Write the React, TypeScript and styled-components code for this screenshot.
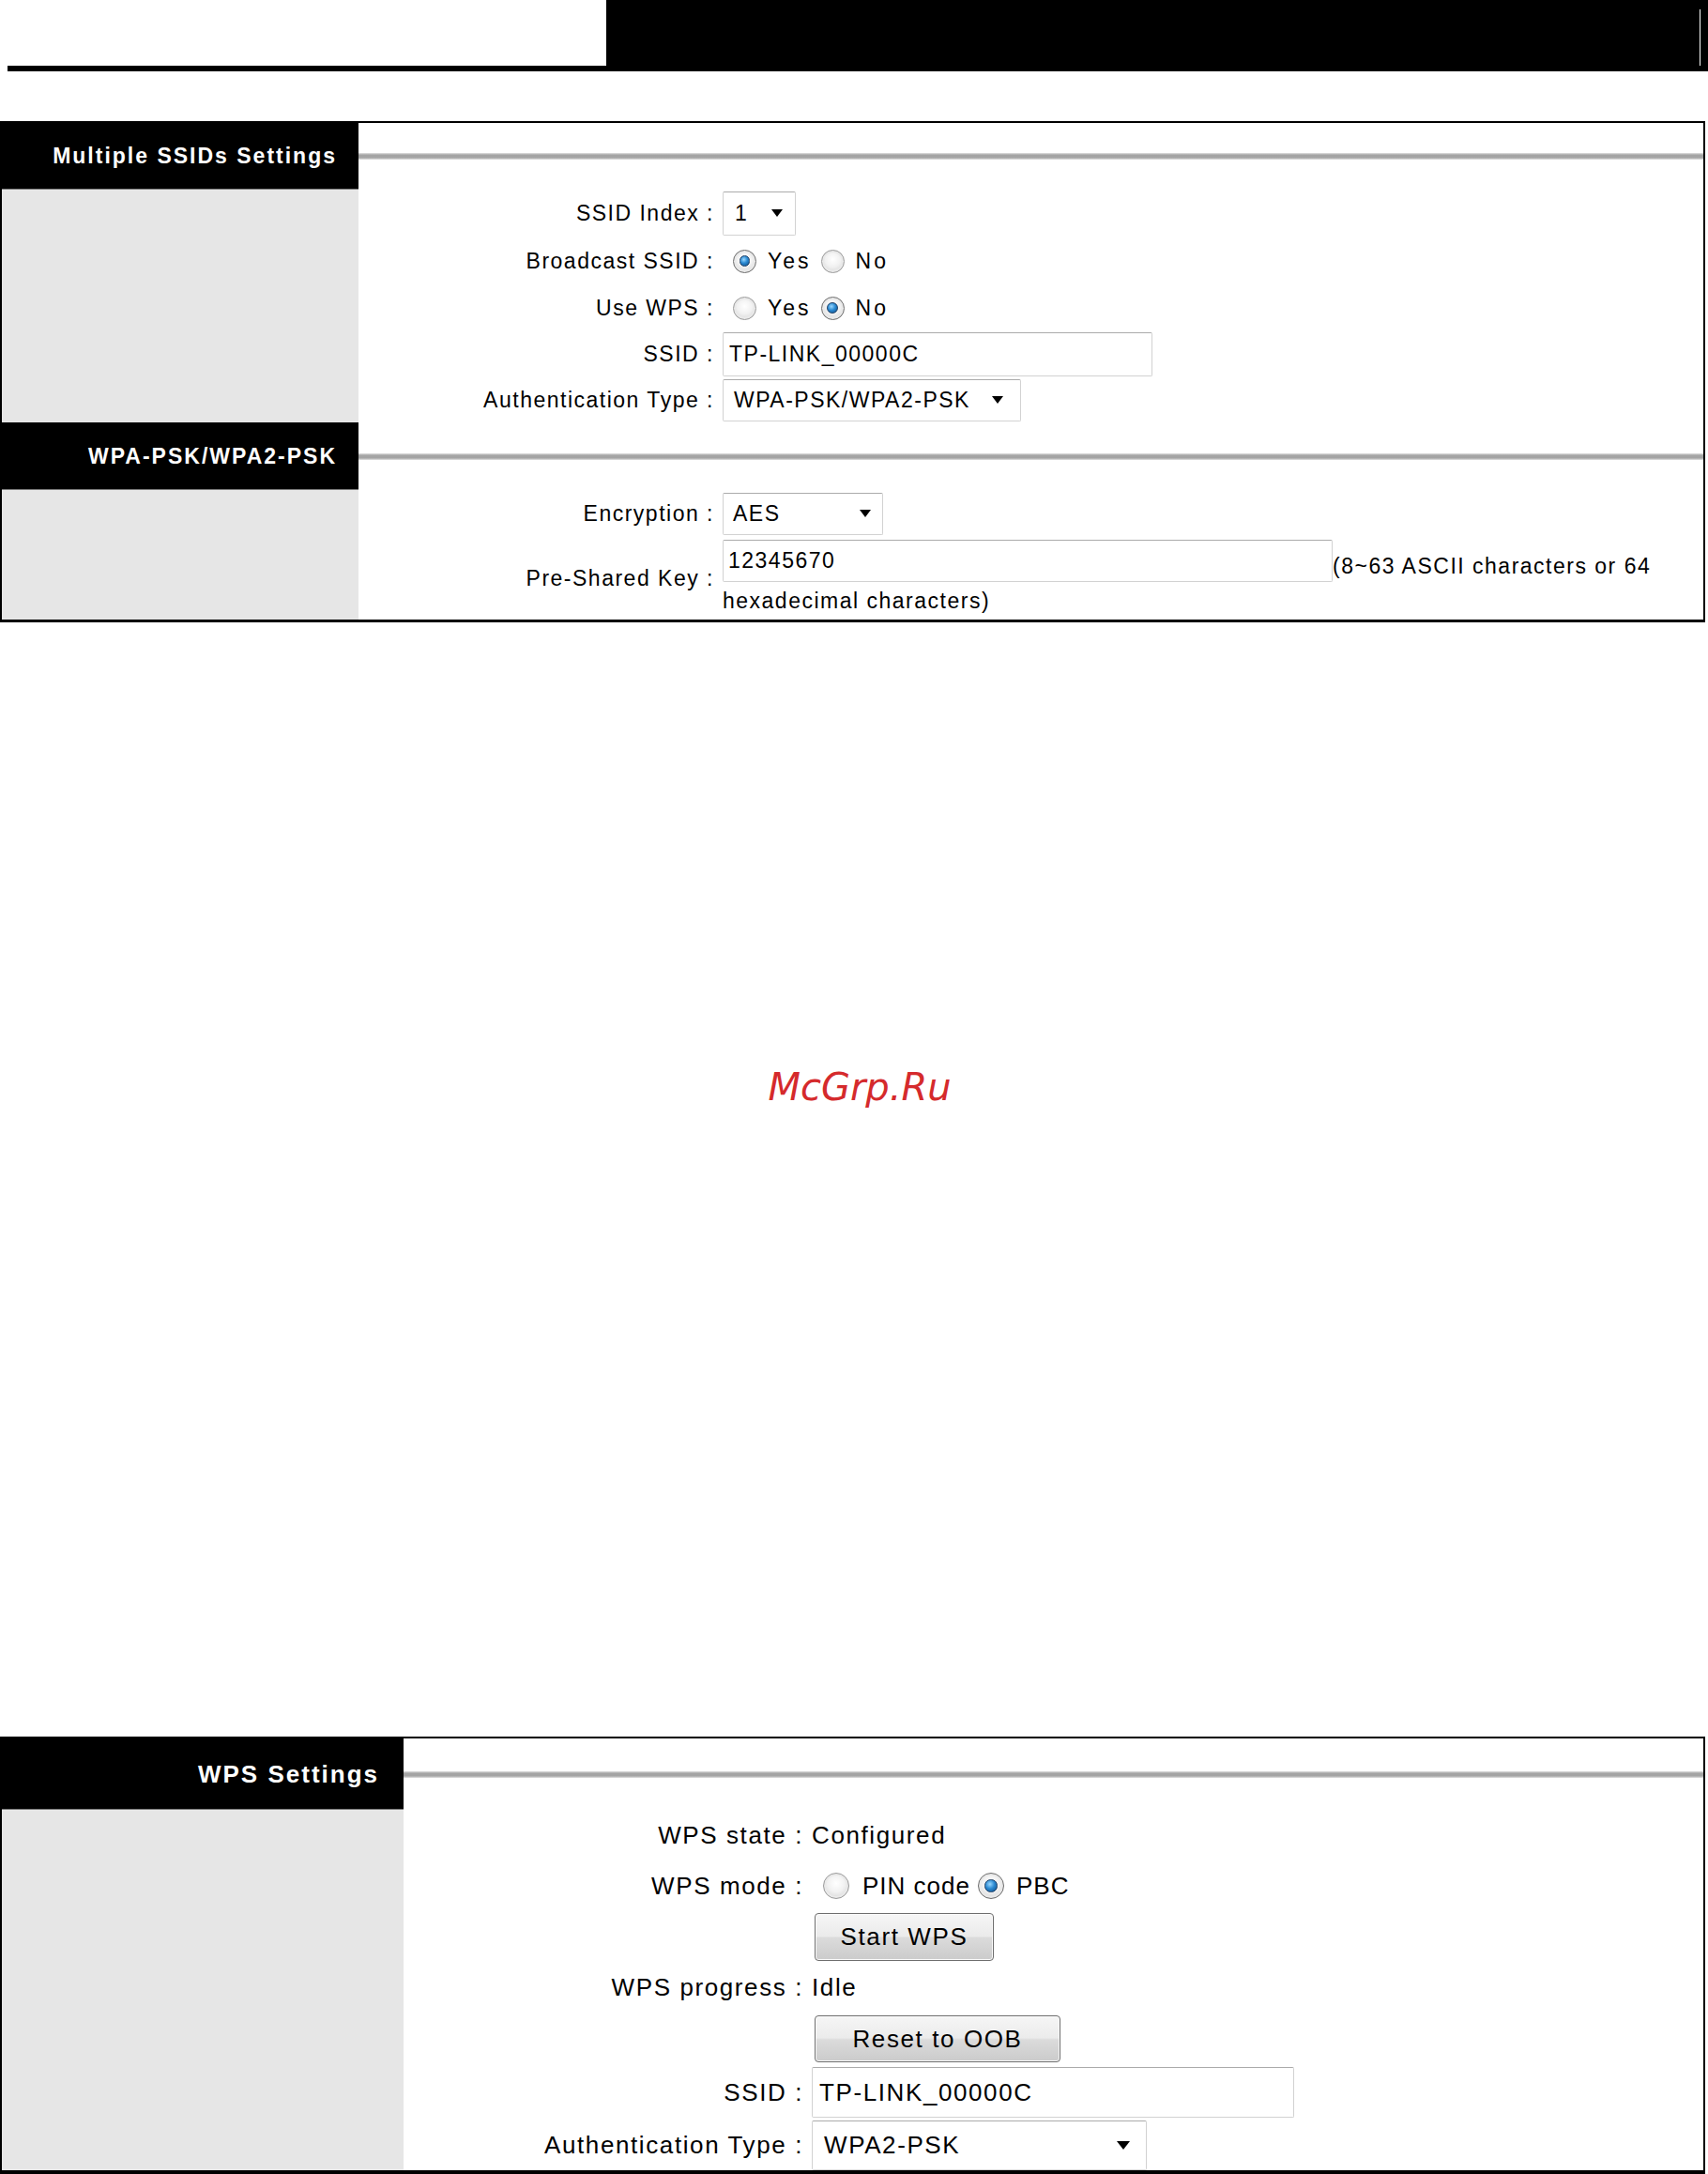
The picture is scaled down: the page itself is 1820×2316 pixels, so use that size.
import { FC, ReactNode } from "react";
import styled, { createGlobalStyle } from "styled-components";

const GlobalStyle = createGlobalStyle`
  html, body {
    margin: 0;
    padding: 0;
    background: #fff;
  }
  body {
    font-family: "Liberation Sans", Arial, sans-serif;
    color: #000;
  }
`;

const Page = styled.div`
  width: 1820px;
  height: 2316px;
  display: flex;
  flex-direction: column;
  overflow: hidden;

  & > * {
    flex-shrink: 0;
  }
`;

/* page header strip */
const TopBar = styled.header`
  display: flex;
  height: 76px;
`;

const TopLeft = styled.div`
  width: 638px;
  margin-left: 8px;
  box-sizing: border-box;
  border-bottom: 6px solid #000;
`;

const TopRight = styled.div`
  flex: 1;
  display: flex;
  justify-content: flex-end;
  padding: 10px 8px 6px 0;
  background: #000;
`;

const EdgeLine = styled.span`
  width: 1px;
  background: #fff;
`;

/* settings panels */
const Panel = styled.section<{ $mt: number; $bottom: number }>`
  margin-top: ${(p) => p.$mt}px;
  width: 1817px;
  box-sizing: border-box;
  border: 2px solid #000;
  border-bottom-width: ${(p) => p.$bottom}px;
`;

const Band = styled.div<{ $side: number }>`
  display: grid;
  grid-template-columns: ${(p) => p.$side}px 1fr;
`;

const HeadCell = styled.div<{
  $h: number;
  $size: number;
  $pad: number;
}>`
  height: ${(p) => p.$h}px;
  box-sizing: border-box;
  display: flex;
  align-items: center;
  justify-content: flex-end;
  padding-right: ${(p) => p.$pad}px;
  background: #000;
  color: #fff;
  font-weight: 700;
  font-size: ${(p) => p.$size}px;
  letter-spacing: 2px;
  white-space: nowrap;
  box-shadow: inset 0 -1px #7a7a7a;
`;

const RuleCell = styled.div`
  display: flex;
  align-items: center;
`;

const Rule = styled.div`
  flex: 1;
  height: 7px;
  background: linear-gradient(
    to bottom,
    #e2e2e2 0%,
    #a4a4a4 30%,
    #a4a4a4 70%,
    #e2e2e2 100%
  );
`;

const Side = styled.div`
  background: #e6e6e6;
`;

const Form = styled.div<{
  $label: number;
  $rows: string;
  $size: number;
  $spacing: number;
}>`
  display: grid;
  grid-template-columns: ${(p) => p.$label}px 1fr;
  grid-template-rows: ${(p) => p.$rows};
  column-gap: 9px;
  font-size: ${(p) => p.$size}px;
  letter-spacing: ${(p) => p.$spacing}px;
`;

const Label = styled.div`
  display: flex;
  align-items: center;
  justify-content: flex-end;
  white-space: nowrap;
`;

const Value = styled.div`
  display: flex;
  align-items: center;
  white-space: nowrap;
`;

const KeyValue = styled.div`
  display: flex;
  flex-direction: column;
  padding-top: 3px;
  white-space: nowrap;
`;

const KeyLine = styled.div`
  display: flex;
  align-items: flex-end;
`;

const Hint = styled.span`
  line-height: 26px;
  padding-bottom: 4px;
`;

const HintTail = styled.div`
  line-height: 40px;
`;

/* form controls */
const Field = styled.div<{ $w: number; $h: number; $pl: number }>`
  width: ${(p) => p.$w}px;
  height: ${(p) => p.$h}px;
  box-sizing: border-box;
  display: flex;
  align-items: center;
  padding-left: ${(p) => p.$pl}px;
  background: #fff;
  border: 1px solid #d2d2d2;
  border-top-color: #ababab;
  border-radius: 2px;
  white-space: nowrap;
`;

const SelectBox = styled(Field)<{ $pr: number }>`
  justify-content: space-between;
  padding-right: ${(p) => p.$pr}px;
`;

const Caret = styled.span<{ $s: number }>`
  width: 0;
  height: 0;
  border-left: ${(p) => p.$s}px solid transparent;
  border-right: ${(p) => p.$s}px solid transparent;
  border-top: ${(p) => p.$s + 2}px solid #000;
`;

const Choice = styled.span<{ $lead: number; $gap: number; $track: number }>`
  display: inline-flex;
  align-items: center;
  gap: ${(p) => p.$gap}px;
  margin-left: ${(p) => p.$lead}px;
  letter-spacing: ${(p) => p.$track}px;
`;

const RadioDot = styled.span<{ $on?: boolean; $size: number }>`
  width: ${(p) => p.$size}px;
  height: ${(p) => p.$size}px;
  flex-shrink: 0;
  box-sizing: border-box;
  display: inline-flex;
  align-items: center;
  justify-content: center;
  border-radius: 50%;
  border: 1px solid ${(p) => (p.$on ? "#6c6c6c" : "#9a9a9a")};
  background: radial-gradient(
    circle at 50% 40%,
    #ffffff 0%,
    #f1f1f1 45%,
    #cbcbcb 100%
  );
  box-shadow: inset 0 0 0 2px #e9e9e9;

  &::after {
    content: "";
    display: ${(p) => (p.$on ? "block" : "none")};
    width: 52%;
    height: 52%;
    box-sizing: border-box;
    border-radius: 50%;
    border: 1px solid #1d3f66;
    background: radial-gradient(
      circle at 40% 35%,
      #9ad8ff 0%,
      #2b8ad2 45%,
      #0b4c88 100%
    );
  }
`;

const PushButton = styled.button<{ $w: number; $h: number }>`
  width: ${(p) => p.$w}px;
  height: ${(p) => p.$h}px;
  margin-left: 3px;
  padding: 0;
  border: 1px solid #6e6e6e;
  border-radius: 4px;
  background: linear-gradient(
    to bottom,
    #f6f6f6 0%,
    #ebebeb 48%,
    #dbdbdb 52%,
    #cbcbcb 100%
  );
  box-shadow: inset 0 0 0 1px #fbfbfb;
  color: #000;
  font: inherit;
  letter-spacing: inherit;
`;

const Watermark = styled.div`
  margin-top: 471px;
  height: 48px;
  line-height: 48px;
  padding-left: 12px;
  text-align: center;
  font-family: "DejaVu Sans", sans-serif;
  font-style: oblique;
  font-size: 40px;
  color: #d52a2c;
`;

interface RadioProps {
  on?: boolean;
  size: number;
  lead: number;
  gap: number;
  track: number;
  children: ReactNode;
}

const Radio: FC<RadioProps> = ({ on, size, lead, gap, track, children }) => (
  <Choice $lead={lead} $gap={gap} $track={track}>
    <RadioDot $on={on} $size={size} />
    {children}
  </Choice>
);

interface SelectProps {
  w: number;
  h: number;
  pl: number;
  pr: number;
  caret: number;
  children: ReactNode;
}

const Select: FC<SelectProps> = ({ w, h, pl, pr, caret, children }) => (
  <SelectBox $w={w} $h={h} $pl={pl} $pr={pr}>
    <span>{children}</span>
    <Caret $s={caret} />
  </SelectBox>
);

const App: FC = () => (
  <Page>
    <GlobalStyle />
    <TopBar>
      <TopLeft />
      <TopRight>
        <EdgeLine />
      </TopRight>
    </TopBar>

    <Panel $mt={53} $bottom={3}>
      <Band $side={380}>
        <HeadCell $h={71} $size={23} $pad={23}>
          Multiple SSIDs Settings
        </HeadCell>
        <RuleCell>
          <Rule />
        </RuleCell>
      </Band>
      <Band $side={380}>
        <Side />
        <Form
          $label={379}
          $rows="50px 52px 48px 50px 48px"
          $size={23}
          $spacing={1.5}
        >
          <Label>SSID Index :</Label>
          <Value>
            <Select w={78} h={47} pl={12} pr={13} caret={6}>
              1
            </Select>
          </Value>
          <Label>Broadcast SSID :</Label>
          <Value>
            <Radio on size={25} lead={11} gap={12} track={3}>
              Yes
            </Radio>
            <Radio size={25} lead={10} gap={12} track={3}>
              No
            </Radio>
          </Value>
          <Label>Use WPS :</Label>
          <Value>
            <Radio size={25} lead={11} gap={12} track={3}>
              Yes
            </Radio>
            <Radio on size={25} lead={10} gap={12} track={3}>
              No
            </Radio>
          </Value>
          <Label>SSID :</Label>
          <Value>
            <Field $w={458} $h={47} $pl={6}>
              TP-LINK_00000C
            </Field>
          </Value>
          <Label>Authentication Type :</Label>
          <Value>
            <Select w={318} h={45} pl={11} pr={18} caret={6}>
              WPA-PSK/WPA2-PSK
            </Select>
          </Value>
        </Form>
      </Band>
      <Band $side={380}>
        <HeadCell $h={72} $size={23} $pad={23}>
          WPA-PSK/WPA2-PSK
        </HeadCell>
        <RuleCell>
          <Rule />
        </RuleCell>
      </Band>
      <Band $side={380}>
        <Side />
        <Form $label={379} $rows="50px 88px" $size={23} $spacing={1.5}>
          <Label>Encryption :</Label>
          <Value>
            <Select w={171} h={45} pl={10} pr={12} caret={6}>
              AES
            </Select>
          </Value>
          <Label>Pre-Shared Key :</Label>
          <KeyValue>
            <KeyLine>
              <Field $w={650} $h={45} $pl={5}>
                12345670
              </Field>
              <Hint>(8~63 ASCII characters or 64</Hint>
            </KeyLine>
            <HintTail>hexadecimal characters)</HintTail>
          </KeyValue>
        </Form>
      </Band>
    </Panel>

    <Watermark>McGrp.Ru</Watermark>

    <Panel $mt={668} $bottom={4}>
      <Band $side={428}>
        <HeadCell $h={76} $size={26} $pad={26}>
          WPS Settings
        </HeadCell>
        <RuleCell>
          <Rule />
        </RuleCell>
      </Band>
      <Band $side={428}>
        <Side />
        <Form
          $label={426}
          $rows="54px 54px 54px 54px 56px 58px 54px"
          $size={26}
          $spacing={1.6}
        >
          <Label>WPS state :</Label>
          <Value>Configured</Value>
          <Label>WPS mode :</Label>
          <Value>
            <Radio size={28} lead={12} gap={14} track={1}>
              PIN code
            </Radio>
            <Radio on size={28} lead={8} gap={13} track={1}>
              PBC
            </Radio>
          </Value>
          <Label />
          <Value>
            <PushButton $w={191} $h={51}>
              Start WPS
            </PushButton>
          </Value>
          <Label>WPS progress :</Label>
          <Value>Idle</Value>
          <Label />
          <Value>
            <PushButton $w={262} $h={50}>
              Reset to OOB
            </PushButton>
          </Value>
          <Label>SSID :</Label>
          <Value>
            <Field $w={514} $h={54} $pl={7}>
              TP-LINK_00000C
            </Field>
          </Value>
          <Label>Authentication Type :</Label>
          <Value>
            <Select w={357} h={53} pl={12} pr={17} caret={7}>
              WPA2-PSK
            </Select>
          </Value>
        </Form>
      </Band>
    </Panel>
  </Page>
);

export default App;
